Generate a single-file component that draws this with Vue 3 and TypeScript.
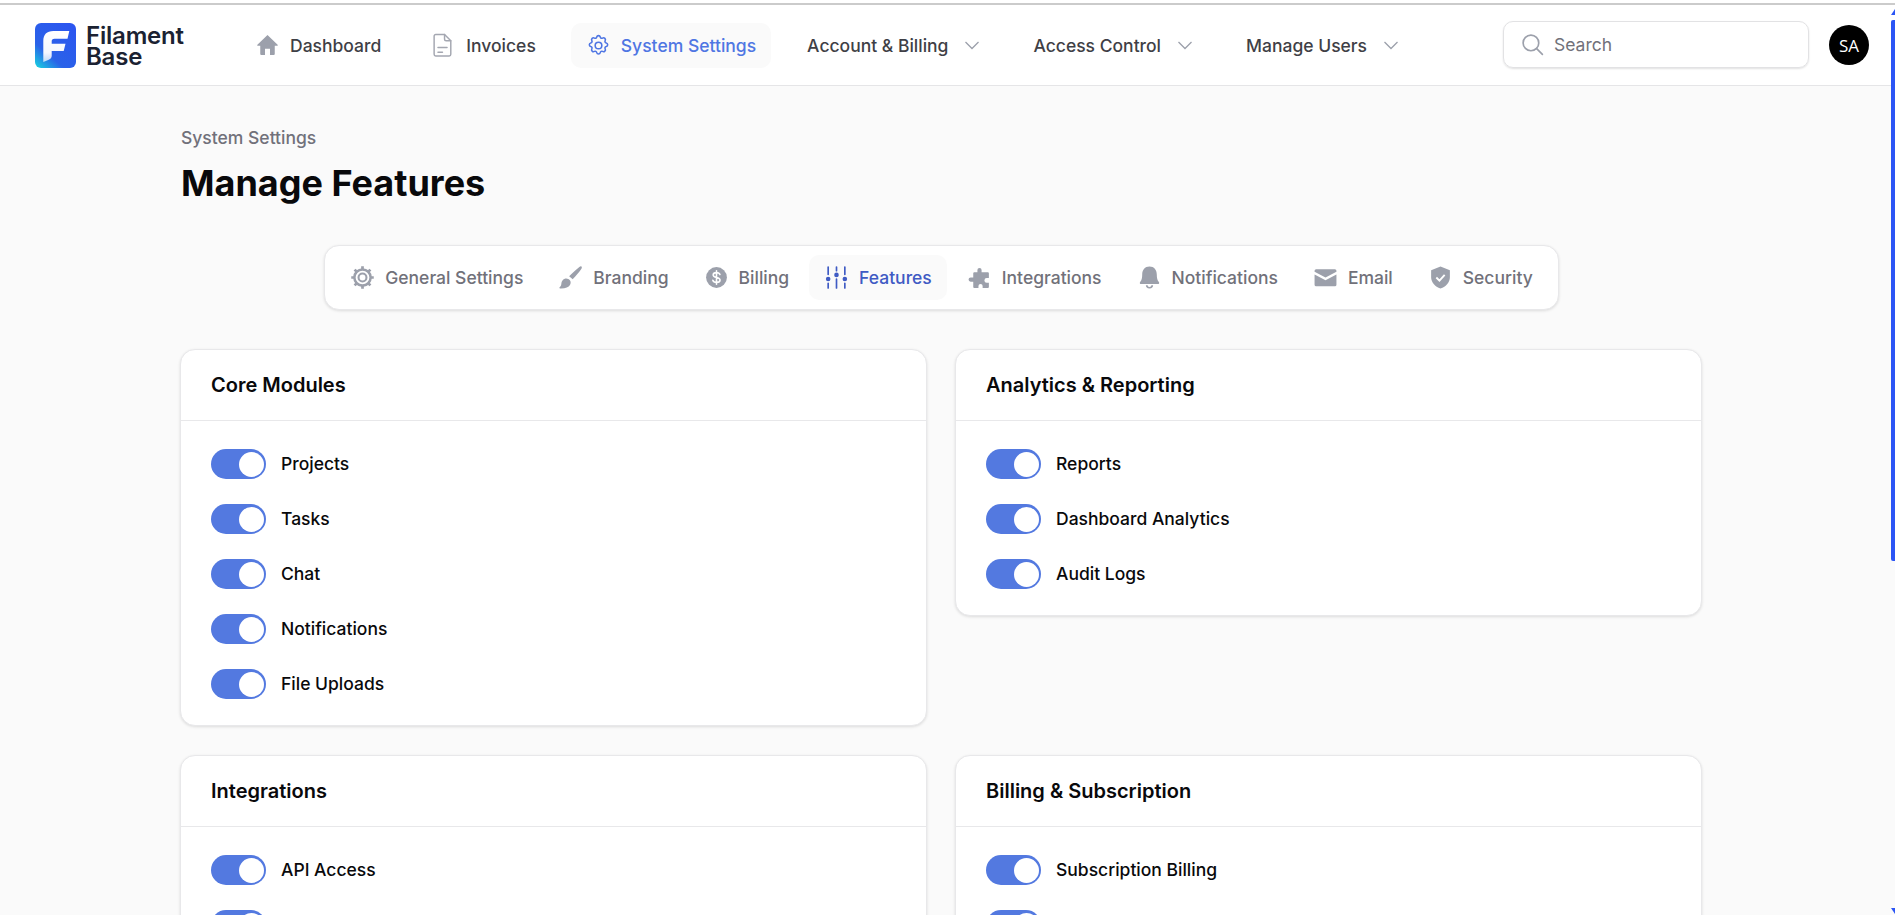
<script setup lang="ts">
interface Card { title: string; items: string[] }
const rows: Card[][] = [
  [
    { title: 'Core Modules', items: ['Projects', 'Tasks', 'Chat', 'Notifications', 'File Uploads'] },
    { title: 'Analytics & Reporting', items: ['Reports', 'Dashboard Analytics', 'Audit Logs'] },
  ],
  [
    { title: 'Integrations', items: ['API Access', 'Webhooks'] },
    { title: 'Billing & Subscription', items: ['Subscription Billing', 'Invoices'] },
  ],
]
</script>

<template>
  <div class="page">
    <div class="topline"></div>
    <header class="header">
      <div class="brand">
        <svg class="logo" viewBox="0 0 41 45" width="41" height="45">
          <defs>
            <linearGradient id="lg" x1="0.85" y1="0" x2="0.05" y2="1">
              <stop offset="0" stop-color="#2b55f0" />
              <stop offset="0.68" stop-color="#2a62e8" />
              <stop offset="1" stop-color="#18cfe0" />
            </linearGradient>
            <linearGradient id="lf" x1="0" y1="0" x2="0" y2="1">
              <stop offset="0" stop-color="#fff" />
              <stop offset="0.7" stop-color="#fff" stop-opacity=".95" />
              <stop offset="1" stop-color="#fff" stop-opacity=".7" />
            </linearGradient>
          </defs>
          <rect width="41" height="45" rx="6" fill="url(#lg)" />
          <path d="M8.300 18c0-6.500 3.500-10 10-10H34.300l-1.800 7.700H19.500c-2 0-2.800 1-2.800 2.800v2.200H30.500l-1.800 7.300H16.700v5c0 2-1.500 3-3.500 4l-4.900 2z" fill="url(#lf)" />
        </svg>
        <div class="brand-text">Filament<br />Base</div>
      </div>
      <nav class="nav">
        <a class="nav-item">
          <svg viewBox="0 0 20 20" width="25" height="25"><path d="M10 1.600 1.900 9.300c-.3.400-.1.900.4.900H4.200v6.600c0 .5.300.8.800.8h3v-5h4v5h3c.5 0 .8-.3.800-.8v-6.600h1.900c.5 0 .7-.5.400-.9z" fill="#9ca0ab" /></svg>
          Dashboard
        </a>
        <a class="nav-item">
          <svg viewBox="0 0 24 24" width="25" height="25" fill="none" stroke="#a4a7b1" stroke-width="1.400" stroke-linecap="round" stroke-linejoin="round"><path d="M13 1.500H4.500A1.500 1.500 0 0 0 3 3v17.500A1.500 1.500 0 0 0 4.500 22h13a1.500 1.500 0 0 0 1.500-1.500V7.500z" /><path d="M13 1.500V6a1.500 1.500 0 0 0 1.500 1.500H19M6.700 14h8.700M6.700 18.500H11" /></svg>
          Invoices
        </a>
        <a class="nav-item active">
          <svg viewBox="0 0 24 24" width="25" height="25" fill="none" stroke="#4f76e3" stroke-width="1.500" stroke-linecap="round" stroke-linejoin="round"><path d="M10.300 3.900c.2-.8.900-1.400 1.700-1.400s1.500.6 1.700 1.400c.2 1 1.300 1.500 2.200 1 .7-.4 1.600-.3 2.200.3s.7 1.500.3 2.200c-.5.900 0 2 1 2.200.8.200 1.400.9 1.400 1.700s-.6 1.500-1.400 1.700c-1 .2-1.500 1.300-1 2.200.4.700.3 1.600-.3 2.200s-1.500.7-2.200.3c-.9-.5-2 0-2.200 1-.2.800-.9 1.400-1.700 1.400s-1.500-.6-1.700-1.400c-.2-1-1.300-1.500-2.200-1-.7.400-1.600.3-2.200-.3s-.7-1.500-.3-2.200c.5-.9 0-2-1-2.200-.8-.2-1.400-.9-1.400-1.700s.6-1.500 1.400-1.700c1-.2 1.500-1.300 1-2.200-.4-.7-.3-1.600.3-2.200s1.500-.7 2.200-.3c.9.500 2 0 2.200-1z" /><circle cx="12" cy="12" r="3.200" /></svg>
          System Settings
        </a>
        <a class="nav-item">
          Account &amp; Billing
          <svg class="chev" viewBox="0 0 20 20" width="20" height="20"><path d="m3.500 7 6.500 6.500L16.500 7" fill="none" stroke="#9ca0ab" stroke-width="1.300" /></svg>
        </a>
        <a class="nav-item">
          Access Control
          <svg class="chev" viewBox="0 0 20 20" width="20" height="20"><path d="m3.500 7 6.500 6.500L16.500 7" fill="none" stroke="#9ca0ab" stroke-width="1.300" /></svg>
        </a>
        <a class="nav-item">
          Manage Users
          <svg class="chev" viewBox="0 0 20 20" width="20" height="20"><path d="m3.500 7 6.500 6.500L16.500 7" fill="none" stroke="#9ca0ab" stroke-width="1.300" /></svg>
        </a>
      </nav>
      <div class="search">
        <svg viewBox="0 0 24 24" width="25" height="25" fill="none" stroke="#9ca0ab" stroke-width="1.600" stroke-linecap="round"><circle cx="10.500" cy="10.500" r="7.500" /><path d="m16 16 5.500 5.500" /></svg>
        <span>Search</span>
      </div>
      <div class="avatar">SA</div>
    </header>

    <main class="main">
      <div class="crumb">System Settings</div>
      <h1 class="title">Manage Features</h1>

      <div class="tabs-wrap">
        <div class="tabs">
          <a class="tab">
            <svg viewBox="0 0 24 24" width="25" height="25" fill="none" stroke="#9ca0ab" stroke-width="2"><circle cx="12" cy="12" r="7.800" stroke-width="2.400" /><circle cx="12" cy="12" r="3.800" /><path stroke-width="2.600" d="M12 1.200v3M12 19.800v3M1.200 12h3M19.800 12h3M4.400 4.400l2.100 2.100M17.500 17.500l2.100 2.100M4.400 19.600l2.100-2.100M17.500 6.500l2.100-2.100" /></svg>
            General Settings
          </a>
          <a class="tab">
            <svg viewBox="0 0 24 24" width="25" height="25" fill="#9ca0ab"><path d="M22.500 1.500c.6.500.5 1.300 0 2.100-2 2.900-5 6.800-8.400 10.100l-3.400-2.800C13.900 7.500 17.700 4 20.500 1.900c.8-.6 1.500-.8 2-.4z" /><path d="M6.500 13.200c2-.6 3.800.2 4.900 1.500 1 1.300 1 3 .1 4.500-1.400 2.300-4.500 3.500-9.500 3.300-.7 0-.9-.7-.4-1.100 1-.8 1.500-1.800 1.600-3.400.2-2.200 1.200-4.100 3.300-4.800z" /></svg>
            Branding
          </a>
          <a class="tab">
            <svg viewBox="0 0 24 24" width="25" height="25"><circle cx="12" cy="12" r="10" fill="#9ca0ab" /><path d="M15.300 9.200c-.4-1.200-1.700-1.900-3.300-1.900-1.800 0-3.200.9-3.200 2.300 0 3.200 6.600 1.600 6.600 4.800 0 1.400-1.400 2.300-3.400 2.300-1.800 0-3.100-.8-3.500-2.100M12 5.500v13" fill="none" stroke="#fff" stroke-width="1.500" stroke-linecap="round" /></svg>
            Billing
          </a>
          <a class="tab active">
            <svg viewBox="0 0 24 24" width="25" height="25" fill="#3f5bc4" stroke="#3f5bc4" stroke-width="1.600" stroke-linecap="round"><path fill="none" d="M4 2v7M4 17.500V22M12 2v3.500M12 13.500V22M20 2v7M20 17.500V22" /><circle cx="4" cy="13.500" r="2.200" stroke="none" /><circle cx="12" cy="9.500" r="2.200" stroke="none" /><circle cx="20" cy="13.500" r="2.200" stroke="none" /></svg>
            Features
          </a>
          <a class="tab">
            <svg viewBox="0 0 24 24" width="25" height="25" fill="#9ca0ab"><path d="M10 7V4.800a2 2 0 1 1 4 0V7h6a1 1 0 0 1 1 1v4.500h-2a2.300 2.300 0 0 0 0 4.600h2V21a1 1 0 0 1-1 1h-5v-1.800a2 2 0 1 0-4 0V22H7a1 1 0 0 1-1-1v-5H3.500a2 2 0 1 1 0-4H6V8a1 1 0 0 1 1-1z" /></svg>
            Integrations
          </a>
          <a class="tab">
            <svg viewBox="0 0 24 24" width="25" height="25" fill="#9ca0ab"><path d="M12 1.500c-4.400 0-7 3.300-7 7.500 0 3.400-.6 5.600-2 7.300-.7.900-.2 2 1 2h16c1.200 0 1.700-1.100 1-2-1.400-1.700-2-3.900-2-7.300 0-4.200-2.600-7.500-7-7.500z" /><path d="M8.500 19.500a3.500 3 0 0 0 7 0h-1.700a1.800 1.600 0 0 1-3.600 0z" /></svg>
            Notifications
          </a>
          <a class="tab">
            <svg viewBox="0 0 24 24" width="25" height="25" fill="#9ca0ab"><path d="M3 4h18a1.500 1.500 0 0 1 1.500 1.500v.9L12 12 1.500 6.400v-.9A1.500 1.500 0 0 1 3 4z" /><path d="M1.500 9v10A1.500 1.500 0 0 0 3 20.500h18a1.500 1.500 0 0 0 1.500-1.500V9L12 14.600z" /></svg>
            Email
          </a>
          <a class="tab">
            <svg viewBox="0 0 24 24" width="25" height="25"><path d="M12 1.500 3 5v6.500c0 5.300 3.600 9.200 9 11 5.400-1.800 9-5.700 9-11V5z" fill="#9ca0ab" /><path d="m8 12 3 3 5-5.500" fill="none" stroke="#fff" stroke-width="1.800" /></svg>
            Security
          </a>
        </div>
      </div>

      <div class="grid">
        <template v-for="(row, r) in rows" :key="r">
          <section v-for="card in row" :key="card.title" class="card">
            <h2 class="card-title">{{ card.title }}</h2>
            <div class="card-body">
              <label v-for="item in card.items" :key="item" class="row">
                <span class="toggle"><span class="knob"></span></span>
                <span class="label">{{ item }}</span>
              </label>
            </div>
          </section>
        </template>
      </div>
    </main>

    <div class="scrollbar">
      <div class="sb-up"></div>
      <div class="sb-thumb"></div>
      <div class="sb-down"></div>
    </div>
  </div>
</template>

<style>
html, body { margin: 0; height: 100%; overflow: hidden; background: #fafafa; }
</style>

<style scoped>
.page {
  height: 915px;
  overflow: hidden;
  position: relative;
  background: #fafafa;
  font-family: Inter, "Noto Sans", sans-serif;
  color: #09090b;
}
.topline { height: 3px; background: #fff; border-bottom: 2px solid #cbcbcb; }
.header {
  height: 81px;
  box-sizing: border-box;
  background: #fff;
  border-bottom: 1px solid #e5e5e7;
  display: flex;
  align-items: center;
  padding-left: 35px;
  padding-right: 26px;
}
.brand { display: flex; align-items: center; gap: 10px; width: 205px; flex: none; }
.logo { flex: none; }
.brand-text { font-size: 24px; line-height: 21px; font-weight: 600; color: #1b2232; letter-spacing: -0.2px; margin-top: 2px; }
.nav { display: flex; align-items: center; gap: 20px; flex: 1; }
.nav-item {
  display: flex;
  align-items: center;
  gap: 10px;
  height: 45px;
  padding: 0 15px;
  border-radius: 10px;
  font-size: 17.5px;
  font-weight: 500;
  color: #3f3f46;
  white-space: nowrap;
}
.nav-item.active { background: #fafafa; color: #4f76e3; margin-right: 1px; }
.chev { margin-left: 3.500px; margin-right: 1.500px; }
.search {
  width: 306px;
  height: 47px;
  box-sizing: border-box;
  border: 1px solid #e2e2e4;
  border-radius: 10px;
  box-shadow: 0 1px 2px rgba(0,0,0,.12);
  display: flex;
  align-items: center;
  gap: 9px;
  padding-left: 16px;
  font-size: 17.5px;
  color: #71717a;
  flex: none;
  margin-top: -2px;
}
.avatar {
  width: 40px;
  height: 40px;
  border-radius: 50%;
  background: #000;
  color: #fff;
  flex: none;
  margin-left: 20px;
  display: flex;
  align-items: center;
  justify-content: center;
  font-size: 17px;
  font-family: "Open Sans", sans-serif;
}
.main { padding: 0 193px 0 181px; }
.crumb { margin-top: 40px; font-size: 17.5px; line-height: 24px; font-weight: 500; color: #71717a; }
.title { margin: 11px 0 0; font-size: 36px; line-height: 45px; font-weight: 700; color: #09090b; }
.tabs-wrap { display: flex; justify-content: center; margin-top: 39px; }
.tabs {
  display: flex;
  gap: 5px;
  align-items: center;
  height: 65px;
  box-sizing: border-box;
  padding: 0 10px;
  background: #fff;
  border: 1px solid #e8e8ea;
  border-radius: 15px;
  box-shadow: 0 1px 3px rgba(0,0,0,.12);
}
.tab {
  display: flex;
  align-items: center;
  gap: 10px;
  height: 45px;
  padding: 0 15px;
  border-radius: 10px;
  font-size: 17.5px;
  font-weight: 500;
  color: #71717a;
  white-space: nowrap;
}
.tab.active { background: #fafafa; color: #3f5bc4; }
.grid {
  display: grid;
  grid-template-columns: 1fr 1fr;
  gap: 29px 28px;
  margin: 39px 0 0 -1px;
  align-items: start;
}
.card {
  background: #fff;
  border: 1px solid #e8e8ea;
  border-radius: 15px;
  box-shadow: 0 1px 3px rgba(0,0,0,.12);
}
.card-title {
  margin: 0;
  height: 71px;
  box-sizing: border-box;
  padding: 0 30px;
  display: flex;
  align-items: center;
  font-size: 20px;
  font-weight: 600;
  color: #09090b;
  border-bottom: 1px solid #e8e8ea;
}
.card-body { padding: 28px 30px 26px; display: flex; flex-direction: column; gap: 25px; }
.row { display: flex; align-items: center; gap: 15px; height: 30px; }
.toggle {
  width: 55px;
  height: 30px;
  border-radius: 15px;
  background: #5379e0;
  position: relative;
  flex: none;
}
.knob {
  position: absolute;
  top: 2.500px;
  right: 2.500px;
  width: 25px;
  height: 25px;
  border-radius: 50%;
  background: #fff;
}
.label { font-size: 17.5px; font-weight: 500; color: #09090b; margin-top: -2px; }
.scrollbar { position: absolute; top: 0; right: 0; bottom: 0; width: 5px; }
.sb-up {
  position: absolute; top: 9px; right: 0;
  width: 0; height: 0;
  border-left: 4px solid transparent;
  border-bottom: 6px solid #2b55f5;
}
.sb-thumb {
  position: absolute; top: 20px; right: 0; width: 4px; height: 541px;
  background: #2b55f5; border-radius: 2px 0 0 2px;
}
.sb-down {
  position: absolute; top: 908px; right: 0;
  width: 0; height: 0;
  border-left: 4px solid transparent;
  border-top: 6px solid #2b55f5;
}
</style>
